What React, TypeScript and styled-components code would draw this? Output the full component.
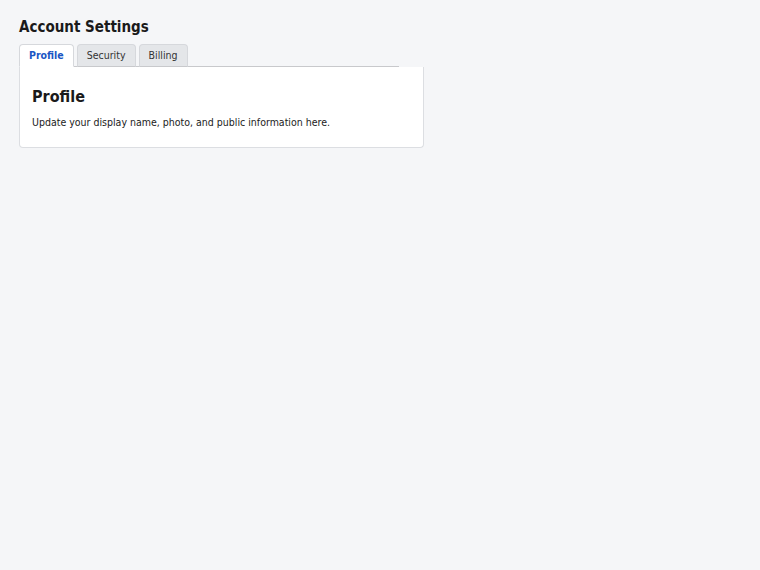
import React, { useState } from "react";
import styled, { createGlobalStyle } from "styled-components";

const Global = createGlobalStyle`
  html, body { margin: 0; padding: 0; background: #f5f6f8; }
  body { font-family: "DejaVu Sans Condensed", "DejaVu Sans", sans-serif; color: #1a1a1a; }
`;

const Page = styled.div`
  padding: 17px 19px;
`;

const Title = styled.h1`
  margin: 0 0 7px;
  font-size: 15px;
  font-weight: 700;
  line-height: 20px;
  color: #1a1a1a;
`;

const Wrap = styled.div`
  width: 405px;
`;

const TabList = styled.div`
  display: flex;
  align-items: flex-end;
  gap: 3px;
  width: 380px;
  border-bottom: 1px solid #c8c9cc;
`;

const Tab = styled.button<{ $active: boolean }>`
  font-family: inherit;
  font-size: 10.5px;
  line-height: 13px;
  padding: 4px 9px;
  margin-bottom: -1px;
  border: 1px solid #d6d8dc;
  border-bottom: 1px solid ${(p) => (p.$active ? "#ffffff" : "#c8c9cc")};
  border-radius: 4px 4px 0 0;
  background: ${(p) => (p.$active ? "#ffffff" : "#e4e6e9")};
  color: ${(p) => (p.$active ? "#1a56c4" : "#333")};
  font-weight: ${(p) => (p.$active ? 700 : 400)};
  cursor: pointer;
`;

const Panel = styled.div`
  background: #fff;
  border: 1px solid #dcdee2;
  border-top: none;
  border-radius: 0 0 4px 4px;
  padding: 21px 12px 19px;
`;

const PanelTitle = styled.h2`
  margin: 0 0 10px;
  font-size: 16px;
  font-weight: 700;
  line-height: 18px;
`;

const PanelText = styled.p`
  margin: 0;
  font-size: 10.5px;
  line-height: 12px;
  color: #222;
`;

const tabs = [
  { id: "profile", label: "Profile", title: "Profile", text: "Update your display name, photo, and public information here." },
  { id: "security", label: "Security", title: "Security", text: "Manage your password and two-factor authentication." },
  { id: "billing", label: "Billing", title: "Billing", text: "View invoices and update your payment method." },
];

export default function App() {
  const [active, setActive] = useState("profile");
  const cur = tabs.find((t) => t.id === active)!;
  return (
    <Page>
      <Global />
      <Title>Account Settings</Title>
      <Wrap>
        <TabList>
          {tabs.map((t) => (
            <Tab key={t.id} $active={t.id === active} onClick={() => setActive(t.id)}>
              {t.label}
            </Tab>
          ))}
        </TabList>
        <Panel>
          <PanelTitle>{cur.title}</PanelTitle>
          <PanelText>{cur.text}</PanelText>
        </Panel>
      </Wrap>
    </Page>
  );
}
